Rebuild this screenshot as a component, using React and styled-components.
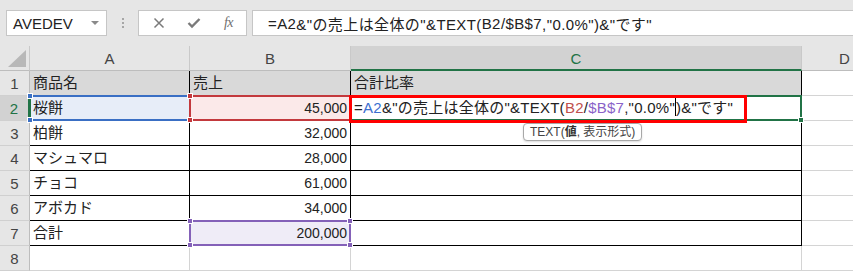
import React from 'react';
import styled, { createGlobalStyle } from 'styled-components';

const GlobalStyle = createGlobalStyle`
  * { box-sizing: border-box; }
  body {
    margin: 0;
    background: #ffffff;
    font-family: "Liberation Sans", "Noto Sans CJK JP", sans-serif;
  }
`;

const Window = styled.div`
  width: 853px;
  height: 271px;
  overflow: hidden;
  background: #ffffff;
`;

const TopBar = styled.div`
  height: 46px;
  background: #e6e6e6;
  display: flex;
  align-items: flex-start;
  padding: 10px 0 0 6px;
`;

const NameBox = styled.div`
  width: 101px;
  height: 26px;
  background: #fff;
  border: 1px solid #c6c6c6;
  display: flex;
  align-items: center;
  justify-content: space-between;
  padding: 0 7px 0 6px;
  font-size: 15px;
  color: #222;
`;

const Caret = styled.span`
  width: 0;
  height: 0;
  border-left: 4px solid transparent;
  border-right: 4px solid transparent;
  border-top: 4px solid #8a8a8a;
`;

const Grip = styled.div`
  width: 31px;
  height: 26px;
  display: flex;
  flex-direction: column;
  align-items: center;
  justify-content: center;
  gap: 2px;
  span {
    width: 2px;
    height: 2px;
    background: #a6a6a6;
  }
`;

const ButtonBox = styled.div`
  width: 109px;
  height: 26px;
  background: #fff;
  border: 1px solid #c6c6c6;
  display: flex;
  align-items: center;
  padding-left: 2px;
`;

const IconButton = styled.div`
  width: 35px;
  height: 24px;
  display: flex;
  align-items: center;
  justify-content: center;
  color: #777;
`;

const Fx = styled.span`
  font-family: "Liberation Serif", serif;
  font-style: italic;
  font-size: 14px;
  color: #6f6f6f;
  letter-spacing: -0.5px;
`;

const FormulaBox = styled.div`
  flex: 1;
  height: 26px;
  margin-left: 5px;
  margin-right: -2px;
  background: #fff;
  border: 1px solid #c6c6c6;
  display: flex;
  align-items: center;
  padding-left: 15px;
  font-size: 15px;
  letter-spacing: 0.4px;
  color: #222;
  white-space: nowrap;
`;

const Row = styled.div`
  display: flex;
  height: 25px;
`;

const Corner = styled.div`
  width: 30px;
  flex: none;
  background: #e6e6e6;
  border-right: 1px solid #c9c9c9;
  border-bottom: 1px solid #bdbdbd;
  display: flex;
  align-items: flex-end;
  justify-content: flex-end;
  padding: 0 3px 3px 0;
`;

const ColHeader = styled.div`
  width: ${p => p.$w}px;
  flex: none;
  background: ${p => (p.$active ? '#d2d2d2' : '#e6e6e6')};
  color: ${p => (p.$active ? '#217346' : '#444')};
  border-right: 1px solid #c9c9c9;
  border-bottom: ${p => (p.$active ? '2px solid #217346' : '1px solid #bdbdbd')};
  display: flex;
  align-items: center;
  justify-content: center;
  font-size: 15px;
  padding-top: 1px;
`;

const RowHeader = styled.div`
  width: 30px;
  flex: none;
  background: ${p => (p.$active ? '#d2d2d2' : '#e6e6e6')};
  color: ${p => (p.$active ? '#217346' : '#444')};
  border-right: ${p => (p.$active ? '2px solid #217346' : '1px solid #bdbdbd')};
  border-bottom: 1px solid #d0d0d0;
  display: flex;
  align-items: center;
  justify-content: center;
  font-size: 15px;
  padding-top: 1px;
`;

const Cell = styled.div`
  position: relative;
  width: ${p => p.$w}px;
  flex: none;
  background: ${p => p.$fill || '#fff'};
  border-right: 1px solid ${p => (p.$table ? '#000' : '#d4d4d4')};
  border-bottom: 1px solid ${p => (p.$table ? '#000' : '#d4d4d4')};
  display: flex;
  align-items: flex-end;
  justify-content: ${p => (p.$num ? 'flex-end' : 'flex-start')};
  padding: 0 3px 2px 3px;
  font-size: ${p => (p.$num ? '14px' : '15px')};
  line-height: 20px;
  color: #222;
  white-space: nowrap;
`;

const Select = styled.div`
  position: absolute;
  left: -1px;
  top: -1px;
  right: -1px;
  bottom: -1px;
  border: 2px solid ${p => p.$color};
  border-left-color: ${p => p.$leftColor || p.$color};
  ${p => p.$noRight && 'border-right: none;'}
  pointer-events: none;
  z-index: 2;
`;

const Handle = styled.span`
  position: absolute;
  width: 6px;
  height: 6px;
  background: ${p => p.$color};
  border: 1px solid #fff;
  ${p => (p.$top ? 'top: -4px;' : 'bottom: -4px;')}
  ${p => (p.$left ? 'left: -4px;' : 'right: -4px;')}
`;

const Annotation = styled.div`
  position: absolute;
  left: -2px;
  top: -1px;
  width: 398px;
  height: 28px;
  border: 3px solid #ff0000;
  z-index: 3;
  pointer-events: none;
`;

const Formula = styled.span`
  position: relative;
  z-index: 4;
  font-size: 15px;
  letter-spacing: 0.25px;
`;

const Ref = styled.span`
  color: ${p => p.$color};
`;

const TextCursor = styled.span`
  display: inline-block;
  width: 1px;
  height: 18px;
  background: #000;
  vertical-align: -3px;
`;

const Tip = styled.div`
  position: absolute;
  left: 172px;
  top: 27px;
  height: 18px;
  padding: 0 6px;
  background: #fff;
  border: 1px solid #a8a8a8;
  border-radius: 4px;
  box-shadow: 0 1px 2px rgba(0, 0, 0, 0.15);
  font-size: 12px;
  line-height: 16px;
  color: #444;
  z-index: 5;
  white-space: nowrap;
  b { font-weight: 700; color: #333; }
`;

const widths = { A: 160, B: 161, C: 451, D: 86 };

const data = [
  ['商品名', '売上', '合計比率'],
  ['桜餅', '45,000', ''],
  ['柏餅', '32,000', ''],
  ['マシュマロ', '28,000', ''],
  ['チョコ', '61,000', ''],
  ['アボカド', '34,000', ''],
  ['合計', '200,000', ''],
];

function XIcon() {
  return (
    <svg width="12" height="12" viewBox="0 0 12 12">
      <path d="M1.5 1.5 L10.5 10.5 M10.5 1.5 L1.5 10.5" stroke="#7a7a7a" strokeWidth="1.5" />
    </svg>
  );
}

function CheckIcon() {
  return (
    <svg width="14" height="12" viewBox="0 0 14 12">
      <path d="M1.5 6 L5 9.5 L12.5 2" stroke="#7a7a7a" strokeWidth="2.4" fill="none" />
    </svg>
  );
}

function FormulaText({ colored }) {
  const blue = colored ? '#3b6fd0' : 'inherit';
  const red = colored ? '#c0504d' : 'inherit';
  const purple = colored ? '#8a62c8' : 'inherit';
  return (
    <>
      =<Ref $color={blue}>A2</Ref>&amp;"の売上は全体の"&amp;TEXT(<Ref $color={red}>B2</Ref>/<Ref $color={purple}>$B$7</Ref>,"0.0%"
      {colored && <TextCursor />})&amp;"です"
    </>
  );
}

export default function App() {
  return (
    <Window>
      <GlobalStyle />
      <TopBar>
        <NameBox>
          AVEDEV
          <Caret />
        </NameBox>
        <Grip><span /><span /><span /></Grip>
        <ButtonBox>
          <IconButton><XIcon /></IconButton>
          <IconButton><CheckIcon /></IconButton>
          <IconButton><Fx>fx</Fx></IconButton>
        </ButtonBox>
        <FormulaBox>
          <FormulaText />
        </FormulaBox>
      </TopBar>

      <Row>
        <Corner>
          <svg width="18" height="17" viewBox="0 0 18 17">
            <polygon points="18,0 18,17 0,17" fill="#b8b8b8" />
          </svg>
        </Corner>
        <ColHeader $w={widths.A}>A</ColHeader>
        <ColHeader $w={widths.B}>B</ColHeader>
        <ColHeader $w={widths.C} $active>C</ColHeader>
        <ColHeader $w={widths.D}>D</ColHeader>
      </Row>

      {data.map((r, i) => {
        const n = i + 1;
        const header = n === 1;
        return (
          <Row key={n}>
            <RowHeader $active={n === 2}>{n}</RowHeader>
            <Cell
              $w={widths.A}
              $table
              $fill={header ? '#d9d9d9' : n === 2 ? '#e7edf8' : undefined}
            >
              {r[0]}
              {n === 2 && (
                <Select $color="#3a6fc4" $leftColor="#217346" $noRight>
                  <Handle $color="#3a6fc4" $top $left />
                  <Handle $color="#3a6fc4" $left />
                </Select>
              )}
            </Cell>
            <Cell
              $w={widths.B}
              $table
              $num={!header}
              $fill={header ? '#d9d9d9' : n === 2 ? '#fbe9e9' : n === 7 ? '#efecf7' : undefined}
            >
              {r[1]}
              {n === 2 && (
                <Select $color="#c3393d">
                  <Handle $color="#c3393d" $top $left />
                  <Handle $color="#c3393d" $left />
                </Select>
              )}
              {n === 7 && (
                <Select $color="#8461b8">
                  <Handle $color="#8461b8" $top $left />
                  <Handle $color="#8461b8" $left />
                  <Handle $color="#8461b8" $top />
                  <Handle $color="#8461b8" />
                </Select>
              )}
            </Cell>
            <Cell $w={widths.C} $table $fill={header ? '#d9d9d9' : undefined}>
              {r[2]}
              {n === 2 && (
                <>
                  <Formula><FormulaText colored /></Formula>
                  <Select $color="#217346">
                    <Handle $color="#217346" />
                  </Select>
                  <Annotation />
                  <Tip>TEXT(<b>値</b>, 表示形式)</Tip>
                </>
              )}
            </Cell>
            <Cell $w={widths.D} />
          </Row>
        );
      })}

      <Row>
        <RowHeader>8</RowHeader>
        <Cell $w={widths.A} />
        <Cell $w={widths.B} />
        <Cell $w={widths.C} />
        <Cell $w={widths.D} />
      </Row>
    </Window>
  );
}
